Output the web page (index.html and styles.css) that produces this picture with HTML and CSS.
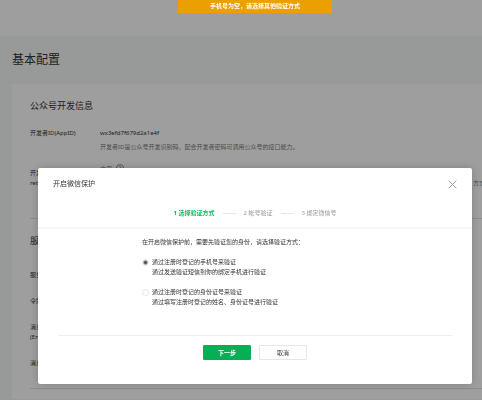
FILE: index.html
```html
<!DOCTYPE html>
<html lang="zh-CN">
<head>
<meta charset="utf-8">
<title>基本配置</title>
<link rel="stylesheet" href="styles.css">
</head>
<body>
<div class="topbar"></div>
<main class="page">
  <h1 class="page-title">基本配置</h1>
  <div class="panel">
    <section class="section">
      <h2 class="section-title">公众号开发信息</h2>
      <div class="row">
        <div class="label">开发者ID(AppID)</div>
        <div class="value">
          <p>wx3efd7f679d2a1e4f</p>
          <p class="hint">开发者ID是公众号开发识别码，配合开发者密码可调用公众号的接口能力。</p>
        </div>
      </div>
      <div class="row row-end">
        <div class="label">开发<br>ret</div>
        <div class="value value-secret">
          <p class="secret"><a href="#">启用</a>
            <svg class="help" viewBox="0 0 8 8" aria-hidden="true"><circle cx="4" cy="4" r="3.5"/><path d="M3 3.2a1 1 0 1 1 1 1.2v.8"/></svg></p>
          <p class="hint hint-end">方式</p>
        </div>
      </div>
    </section>
    <section class="section section-server">
      <h2 class="section-title">服务</h2>
      <div class="row"><div class="label">服务</div></div>
      <div class="row"><div class="label">令牌</div></div>
      <div class="row"><div class="label">消息<br>(En</div></div>
      <div class="row"><div class="label">消息</div></div>
    </section>
  </div>
</main>

<div class="overlay">
  <div class="toast" role="alert">手机号为空，请选择其他验证方式</div>
  <form class="dialog" role="dialog" aria-labelledby="dialog-title">
    <header class="dialog-head">
      <h3 class="dialog-title" id="dialog-title">开启微信保护</h3>
      <button class="close" type="button" aria-label="关闭"><svg viewBox="0 0 9 9"><path d="M.7.7l7.6 7.6M8.3.7L.7 8.3"/></svg></button>
    </header>
    <ol class="steps">
      <li class="step current">1 选择验证方式</li>
      <li class="step">2 帐号验证</li>
      <li class="step">3 绑定微信号</li>
    </ol>
    <div class="choices">
      <p>在开启微信保护前，需要先验证您的身份，请选择验证方式：</p>
      <label class="choice"><input type="radio" name="method" checked><span>通过注册时登记的手机号来验证<br>通过发送验证短信到你的绑定手机进行验证</span></label>
      <label class="choice"><input type="radio" name="method"><span>通过注册时登记的身份证号来验证<br>通过填写注册时登记的姓名、身份证号进行验证</span></label>
    </div>
    <footer class="actions">
      <button class="btn primary" type="submit">下一步</button>
      <button class="btn" type="button">取消</button>
    </footer>
  </form>
</div>
</body>
</html>
```
FILE: styles.css
```css
* {
  box-sizing: border-box;
  margin: 0;
  padding: 0;
}

html {
  height: 100%;
  overflow: hidden;
}

body {
  height: 100%;
  overflow: hidden;
  background: #f5f8f7;
  color: #353535;
  font: 6px/10px "Noto Sans", "Noto Sans CJK SC", sans-serif;
}

.topbar {
  height: 36px;
  background: #fff;
}

.page {
  padding: 16px 0 0 12px;
}

.page-title {
  font-size: 12px;
  line-height: 16px;
  font-weight: 400;
}

.panel {
  margin-top: 16px;
  padding: 16px 0 10px 18px;
  background: #fff;
}

.section {
  padding-bottom: 30px;
  border-bottom: 1px solid #e4e4e4;
}

.section-server {
  padding: 16px 0 20px;
}

.section-title {
  margin-bottom: 16px;
  font-size: 9px;
  line-height: 12px;
  font-weight: 400;
}

.section-server .section-title {
  margin-bottom: 23px;
}

.row {
  display: flex;
}

.row + .row {
  margin-top: 12px;
}

.section-server .row + .row {
  margin-top: 16px;
}

.row-end {
  align-items: flex-end;
}

.label {
  flex: 0 0 70px;
}

.value {
  flex: 1;
}

.hint {
  margin-top: 4px;
  color: #7a7a7a;
}

.hint-end {
  margin-right: -3px;
  text-align: right;
}

.secret {
  display: flex;
  gap: 4px;
}

.secret a {
  color: #576b95;
  text-decoration: none;
}

.help {
  width: 8px;
  height: 8px;
  fill: none;
  stroke: #8a8a8a;
}

.overlay {
  position: fixed;
  inset: 0;
  display: grid;
  grid-template-rows: 168px auto;
  align-items: start;
  padding: 0 10px 0 38px;
  background: rgba(0, 0, 0, 0.38);
}

.toast {
  justify-self: center;
  padding: 1px 32px 2px;
  background: #eaa000;
  color: #fff;
  font-weight: 700;
}

.dialog {
  border-radius: 2px;
  background: #fff;
  box-shadow: 0 0 8px rgba(0, 0, 0, 0.2);
}

.dialog-head {
  display: flex;
  align-items: center;
  justify-content: space-between;
  padding: 10px 15px;
}

.dialog-title {
  font-size: 7px;
  line-height: 12px;
  font-weight: 400;
}

.close {
  width: 9px;
  height: 9px;
  border: 0;
  background: none;
}

.close svg {
  display: block;
  fill: none;
  stroke: #999;
}

.steps {
  display: flex;
  justify-content: center;
  padding: 8px 0 9px;
  border-bottom: 2px solid #f6f6f6;
  list-style: none;
}

.step {
  display: flex;
  align-items: center;
  color: #9a9a9a;
}

.step + .step::before {
  content: "";
  width: 13px;
  height: 1px;
  margin: 0 8px;
  background: #e7e7e7;
}

.current {
  color: #07c160;
  font-weight: 700;
}

.choices {
  margin: 0 20px;
  padding: 8px 0 28px 84px;
  border-bottom: 1px solid #ededed;
}

.choice {
  display: flex;
  gap: 3px;
  margin-top: 10px;
}

.choice input {
  appearance: none;
  flex: none;
  width: 7px;
  height: 7px;
  margin-top: 2px;
  border: 1px solid #e4e4e4;
  border-radius: 50%;
  background: #fff;
}

.choice input:checked {
  background: radial-gradient(circle, #555 0 1px, #fff 3px);
}

.actions {
  display: flex;
  justify-content: center;
  gap: 8px;
  padding: 9px 0 24px;
}

.btn {
  width: 48px;
  height: 15px;
  border: 1px solid #e6e6e6;
  border-radius: 1px;
  background: #fff;
  color: #353535;
  font: inherit;
}

.primary {
  border-color: #07ae56;
  background: #07ae56;
  color: #fff;
  font-weight: 700;
}
```
